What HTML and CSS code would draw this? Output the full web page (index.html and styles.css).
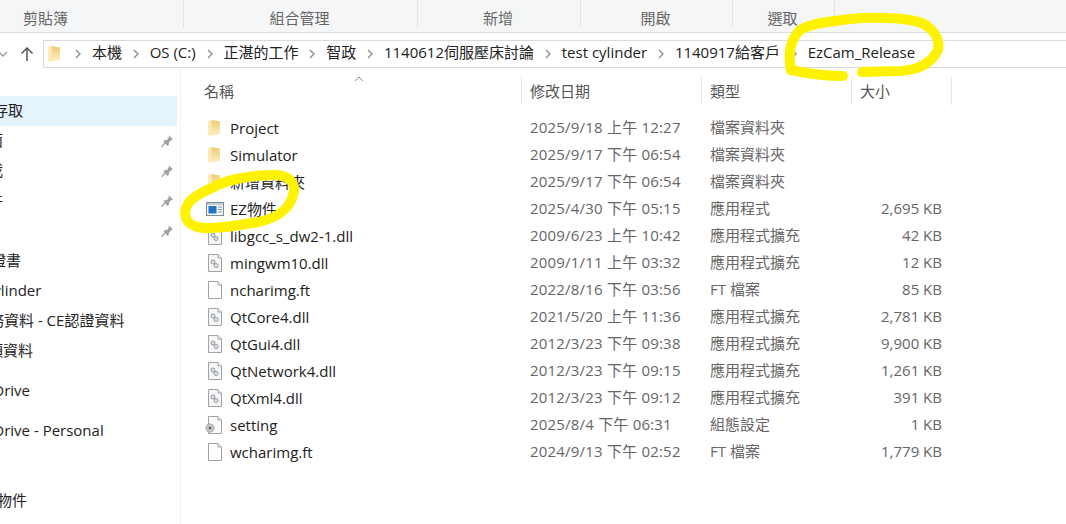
FILE: index.html
```html
<!DOCTYPE html>
<html lang="zh-Hant">
<head>
<meta charset="utf-8">
<title>EzCam_Release</title>
<link rel="stylesheet" href="styles.css">
</head>
<body>
<svg width="0" height="0" class="defs">
  <defs>
    <linearGradient id="fold" x1="0" y1="0" x2="0" y2="1">
      <stop offset="0" stop-color="#edcb74"/>
      <stop offset="1" stop-color="#fdf0c4"/>
    </linearGradient>
    <symbol id="folder" viewBox="0 0 18 18">
      <path d="M2 1.500h5v15H2.500L2 15z" fill="#fcecb8"/>
      <path d="M5.500 1L14 2.500v12.500L5.500 16.500z" fill="url(#fold)"/>
    </symbol>
    <symbol id="page" viewBox="0 0 18 18">
      <path d="M2.500 .5h9.500l3.500 3.500v13.500h-13z" fill="#fff" stroke="#a3a3a3"/>
      <path d="M12 .5v3.500h3.500" fill="#f2f2f2" stroke="#a3a3a3"/>
    </symbol>
    <symbol id="dll" viewBox="0 0 18 18">
      <path d="M2.500 .5h9.500l3.500 3.500v13.500h-13z" fill="#f6f6f6" stroke="#a3a3a3"/>
      <path d="M12 .5v3.500h3.500" fill="#eee" stroke="#a3a3a3"/>
      <circle cx="7" cy="8" r="2" fill="#dfe5ea" stroke="#8d9aa6"/>
      <circle cx="10" cy="11.500" r="2" fill="#dfe5ea" stroke="#8d9aa6"/>
    </symbol>
    <symbol id="pin" viewBox="0 0 14 14">
      <path d="M8.500 1l4.500 4.500-1.500.5-2.500 2.500-.3 2.700-1.200.8L3.500 7.500l.8-1.200L7 6l2-3z" fill="#9ea3a8"/>
      <path d="M5 9l-3.500 3.800" stroke="#9ea3a8" stroke-width="1.300" fill="none"/>
    </symbol>
    <symbol id="chev" viewBox="0 0 6 10">
      <path d="M1 1l4 4-4 4" fill="none" stroke="#8a8a8a" stroke-width="1.300"/>
    </symbol>
  </defs>
</svg>

<header class="ribbon">
  <div class="group g1">剪貼簿</div>
  <div class="group g2">組合管理</div>
  <div class="group g3">新增</div>
  <div class="group g4">開啟</div>
  <div class="group g5">選取</div>
</header>

<div class="addressrow">
  <div class="navbtns">
    <svg class="down" width="10" height="6" viewBox="0 0 10 6"><path d="M1 1l4 4 4-4" fill="none" stroke="#9a9a9a" stroke-width="1.300"/></svg>
    <svg class="up" width="14" height="16" viewBox="0 0 14 16"><path d="M7 15V2M1.500 7.500L7 2l5.500 5.500" fill="none" stroke="#555" stroke-width="1.500"/></svg>
  </div>
  <nav class="address">
    <svg class="addr-folder"><use href="#folder"/></svg>
    <svg class="sep"><use href="#chev"/></svg><span class="crumb">本機</span>
    <svg class="sep"><use href="#chev"/></svg><span class="crumb">OS (C:)</span>
    <svg class="sep"><use href="#chev"/></svg><span class="crumb">正湛的工作</span>
    <svg class="sep"><use href="#chev"/></svg><span class="crumb">智政</span>
    <svg class="sep"><use href="#chev"/></svg><span class="crumb">1140612伺服壓床討論</span>
    <svg class="sep"><use href="#chev"/></svg><span class="crumb">test cylinder</span>
    <svg class="sep"><use href="#chev"/></svg><span class="crumb">1140917給客戶</span>
    <svg class="sep"><use href="#chev"/></svg><span class="crumb">EzCam_Release</span>
  </nav>
</div>

<main class="main">
  <aside class="sidebar">
    <div class="nav-item active"><span class="label l-quick">快速存取</span></div>
    <div class="nav-item"><span class="label l-2">桌面</span><svg class="pin"><use href="#pin"/></svg></div>
    <div class="nav-item"><span class="label l-2">下載</span><svg class="pin"><use href="#pin"/></svg></div>
    <div class="nav-item"><span class="label l-2">文件</span><svg class="pin"><use href="#pin"/></svg></div>
    <div class="nav-item"><span class="label l-2">圖片</span><svg class="pin"><use href="#pin"/></svg></div>
    <div class="nav-item"><span class="label l-cert">認證書</span></div>
    <div class="nav-item"><span class="label l-cyl">test cylinder</span></div>
    <div class="nav-item"><span class="label l-ce">業務資料 - CE認證資料</span></div>
    <div class="nav-item"><span class="label l-proj">專案項資料</span></div>
    <div class="nav-item gap"><span class="label l-od">OneDrive</span></div>
    <div class="nav-item gap"><span class="label l-od">OneDrive - Personal</span></div>
    <div class="nav-item gap-lg"><span class="label l-ez">EZ物件</span></div>
  </aside>

  <section class="files">
    <div class="head">
      <div class="col c-name">名稱<svg class="caret" width="10" height="6" viewBox="0 0 10 6"><path d="M1 5l4-4 4 4" fill="none" stroke="#8a8a8a"/></svg></div>
      <div class="col c-date">修改日期</div>
      <div class="col c-type">類型</div>
      <div class="col c-size">大小</div>
    </div>
    <div class="rows">
      <div class="row"><div class="name"><svg class="ico"><use href="#folder"/></svg>Project</div><div class="date">2025/9/18 上午 12:27</div><div class="type">檔案資料夾</div><div class="size"></div></div>
      <div class="row"><div class="name"><svg class="ico"><use href="#folder"/></svg>Simulator</div><div class="date">2025/9/17 下午 06:54</div><div class="type">檔案資料夾</div><div class="size"></div></div>
      <div class="row"><div class="name"><svg class="ico"><use href="#folder"/></svg>新增資料夾</div><div class="date">2025/9/17 下午 06:54</div><div class="type">檔案資料夾</div><div class="size"></div></div>
      <div class="row"><div class="name"><svg class="ico" viewBox="0 0 18 18"><rect x=".5" y="2.500" width="17" height="13" fill="#f4f6f8" stroke="#7c8a96"/><rect x="1" y="3" width="16" height="2" fill="#c3ccd4"/><rect x="2.500" y="6" width="8" height="7.500" fill="#1f74c4"/><path d="M12 7h4M12 9.500h4M12 12h4" stroke="#8a97a3"/></svg>EZ物件</div><div class="date">2025/4/30 下午 05:15</div><div class="type">應用程式</div><div class="size">2,695 KB</div></div>
      <div class="row"><div class="name"><svg class="ico"><use href="#dll"/></svg>libgcc_s_dw2-1.dll</div><div class="date">2009/6/23 上午 10:42</div><div class="type">應用程式擴充</div><div class="size">42 KB</div></div>
      <div class="row"><div class="name"><svg class="ico"><use href="#dll"/></svg>mingwm10.dll</div><div class="date">2009/1/11 上午 03:32</div><div class="type">應用程式擴充</div><div class="size">12 KB</div></div>
      <div class="row"><div class="name"><svg class="ico"><use href="#page"/></svg>ncharimg.ft</div><div class="date">2022/8/16 下午 03:56</div><div class="type">FT 檔案</div><div class="size">85 KB</div></div>
      <div class="row"><div class="name"><svg class="ico"><use href="#dll"/></svg>QtCore4.dll</div><div class="date">2021/5/20 上午 11:36</div><div class="type">應用程式擴充</div><div class="size">2,781 KB</div></div>
      <div class="row"><div class="name"><svg class="ico"><use href="#dll"/></svg>QtGui4.dll</div><div class="date">2012/3/23 下午 09:38</div><div class="type">應用程式擴充</div><div class="size">9,900 KB</div></div>
      <div class="row"><div class="name"><svg class="ico"><use href="#dll"/></svg>QtNetwork4.dll</div><div class="date">2012/3/23 下午 09:15</div><div class="type">應用程式擴充</div><div class="size">1,261 KB</div></div>
      <div class="row"><div class="name"><svg class="ico"><use href="#dll"/></svg>QtXml4.dll</div><div class="date">2012/3/23 下午 09:12</div><div class="type">應用程式擴充</div><div class="size">391 KB</div></div>
      <div class="row"><div class="name"><svg class="ico ico-over" viewBox="0 0 18 18"><path d="M2.500 .5h9.500l3.500 3.500v13.500h-13z" fill="#fbfbfb" stroke="#a3a3a3"/><path d="M12 .5v3.500h3.500" fill="#f2f2f2" stroke="#a3a3a3"/><circle cx="4" cy="12" r="4" fill="#c4c7ca" stroke="#a5a8ab" stroke-width="1.500" stroke-dasharray="1.500 1"/><circle cx="4" cy="12" r="1.300" fill="#555"/></svg>setting</div><div class="date">2025/8/4 下午 06:31</div><div class="type">組態設定</div><div class="size">1 KB</div></div>
      <div class="row"><div class="name"><svg class="ico"><use href="#page"/></svg>wcharimg.ft</div><div class="date">2024/9/13 下午 02:52</div><div class="type">FT 檔案</div><div class="size">1,779 KB</div></div>
    </div>
  </section>
</main>

<svg class="scribble" width="1066" height="524" viewBox="0 0 1066 524">
  <path d="M843 76C825 76 805 73 791 70C788 55 790 40 800 30C815 22 830 22 850 19C870 17 905 17 922 23C935 30 940 40 938 50C932 62 920 70 900 71L862 72"/>
  <path d="M212 188C225 180 250 175 275 175C290 175 297 185 293 195C290 208 278 218 258 222C235 226 205 231 195 226C183 222 183 210 190 201C197 194 205 191 214 187"/>
</svg>
</body>
</html>
```

FILE: styles.css
```css
* { box-sizing: border-box; }
html, body { margin: 0; height: 100%; }
body {
  width: 1066px; height: 524px; overflow: hidden; position: relative;
  background: #fff; color: #1a1a1a;
  font: 15px/20px "Open Sans", "Noto Sans CJK TC", sans-serif;
}
.defs { position: absolute; }

.ribbon { display: flex; height: 33px; background: #f5f6f7; border-bottom: 1px solid #dadbdc; color: #666; }
.group { display: flex; justify-content: center; align-items: center; height: 28px; padding: 8px 2px 0 0; border-right: 1px solid #e2e3e4; }
.g1 { width: 184px; padding-right: 92px; }
.g2 { width: 234px; }
.g3 { width: 163px; }
.g4 { width: 152px; }
.g5 { width: 102px; }

.addressrow { display: flex; align-items: center; height: 35px; padding-top: 7px; }
.navbtns { width: 43px; display: flex; align-items: center; flex: none; }
.down { margin-left: -2px; }
.up { margin-left: 12px; }
.address { flex: 1; height: 28px; border: 1px solid #d9d9d9; border-right: 0; display: flex; align-items: center; padding: 0 0 5px 5px; color: #222; white-space: nowrap; }
.addr-folder { width: 18px; height: 18px; flex: none; margin: 5px 0 0 -3px; }
.sep { width: 6px; height: 10px; flex: none; margin: 5px 10.875px 0; }
.addr-folder + .sep { margin-left: 11px; }
.crumb { flex: none; }

.main { display: flex; height: 456px; }
.sidebar { width: 181px; flex: none; overflow: hidden; border-right: 1px solid #f0f0f0; padding-right: 3px; padding-top: 28px; color: #222; }
.nav-item { height: 30px; display: flex; align-items: center; position: relative; white-space: nowrap; }
.nav-item.active { background: #e5f3fd; }
.nav-item.gap { margin-top: 10px; }
.nav-item.gap-lg { margin-top: 40px; }
.pin { position: absolute; left: 160px; top: 8px; width: 14px; height: 14px; }
.label { display: block; flex: none; padding-bottom: 2px; }
.l-quick { margin-left: -37px; }
.l-2 { margin-left: -27px; }
.l-cert { margin-left: -24px; }
.l-cyl { margin-left: -44px; }
.l-ce { margin-left: -26px; }
.l-proj { margin-left: -42px; }
.l-od { margin-left: -36px; }
.l-ez { margin-left: -20px; }

.files { flex: 1; padding-top: 9px; min-width: 0; }
.head { display: flex; height: 30px; color: #555; padding-bottom: 2px; }
.col { display: flex; align-items: center; border-right: 1px solid #e5e5e5; padding-left: 8px; position: relative; }
.c-name { width: 341px; padding-left: 23px; }
.c-date { width: 180px; }
.c-type { width: 150px; }
.c-size { width: 100px; }
.caret { position: absolute; left: 173px; top: -1px; }

.rows { padding-top: 7px; }
.row { display: flex; height: 27px; align-items: center; color: #666; white-space: nowrap; }
.row > div { padding-bottom: 1px; }
.name { width: 341px; display: flex; align-items: center; padding-left: 25px; color: #222; }
.row > .name { padding-bottom: 0; }
.ico { width: 18px; height: 18px; flex: none; margin-right: 6px; }
.ico-over { overflow: visible; }
.date { width: 180px; padding-left: 8px; letter-spacing: .2px; }
.type { width: 150px; padding-left: 8px; }
.size { width: 90px; text-align: right; }

.scribble { position: absolute; left: 0; top: 0; pointer-events: none; }
.scribble path { fill: none; stroke: #fff200; stroke-width: 10; stroke-linecap: round; stroke-linejoin: round; }
```
